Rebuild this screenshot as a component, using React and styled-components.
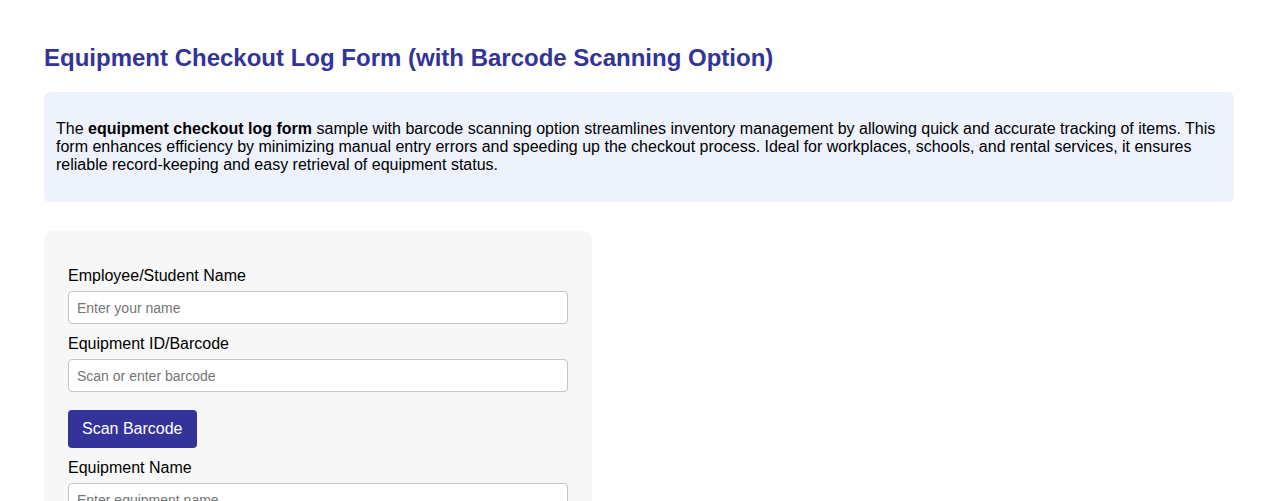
import React from "react";
import styled, { createGlobalStyle } from "styled-components";

const GlobalStyle = createGlobalStyle`
  html, body {
    margin: 0;
    padding: 0;
    background: #ffffff;
  }

  body {
    font-family: "Liberation Sans", Arial, sans-serif;
    color: #000000;
  }

  * {
    box-sizing: border-box;
  }
`;

const Page = styled.div`
  padding: 44px 44px 0;
`;

const Title = styled.h1`
  margin: 0 0 20px;
  font-size: 24px;
  line-height: 28px;
  font-weight: 700;
  color: #333399;
`;

const Intro = styled.div`
  background: #eef2fd;
  border-radius: 6px;
  padding: 12px;
`;

const IntroText = styled.p`
  margin: 16px 0;
  font-size: 16px;
  line-height: 18px;
`;

const FormCard = styled.form`
  margin-top: 29px;
  width: 548px;
  background: #f7f7f7;
  border-radius: 8px;
  padding: 36px 24px 24px;
`;

const Label = styled.label`
  display: block;
  font-size: 16px;
  line-height: 18px;
  margin-bottom: 6px;
`;

const Input = styled.input`
  display: block;
  width: 500px;
  height: 33px;
  margin: 0 0 11px;
  padding: 0 8px;
  border: 1px solid #c4c4c4;
  border-radius: 4px;
  background: #ffffff;
  font-family: "Liberation Sans", Arial, sans-serif;
  font-size: 14px;

  &::placeholder {
    color: #757575;
  }
`;

const ScanButton = styled.button`
  display: block;
  margin: 18px 0 11px;
  height: 38px;
  padding: 0 14px;
  border: none;
  border-radius: 4px;
  background: #333399;
  color: #ffffff;
  font-family: "Liberation Sans", Arial, sans-serif;
  font-size: 16px;
  cursor: pointer;
`;

const fields = [
  { id: "name", label: "Employee/Student Name", placeholder: "Enter your name" },
  { id: "barcode", label: "Equipment ID/Barcode", placeholder: "Scan or enter barcode", scan: true },
  { id: "equipment", label: "Equipment Name", placeholder: "Enter equipment name" }
];

const App = () => {
  return (
    <>
      <GlobalStyle />
      <Page>
        <Title>Equipment Checkout Log Form (with Barcode Scanning Option)</Title>
        <Intro>
          <IntroText>
            The <strong>equipment checkout log form</strong> sample with barcode scanning option
            streamlines inventory management by allowing quick and accurate tracking of items. This
            form enhances efficiency by minimizing manual entry errors and speeding up the checkout
            process. Ideal for workplaces, schools, and rental services, it ensures reliable
            record-keeping and easy retrieval of equipment status.
          </IntroText>
        </Intro>
        <FormCard onSubmit={e => e.preventDefault()}>
          {fields.map(f => (
            <React.Fragment key={f.id}>
              <Label htmlFor={f.id}>{f.label}</Label>
              <Input id={f.id} type="text" placeholder={f.placeholder} />
              {f.scan && <ScanButton type="button">Scan Barcode</ScanButton>}
            </React.Fragment>
          ))}
        </FormCard>
      </Page>
    </>
  );
};

export default App;
